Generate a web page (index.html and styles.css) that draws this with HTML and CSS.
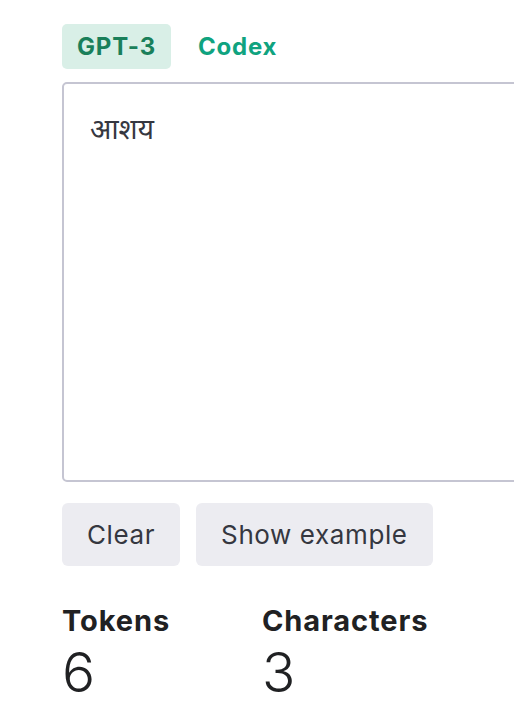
FILE: index.html
```html
<!DOCTYPE html>
<html lang="en">
<head>
    <meta charset="UTF-8">
    <title>Tokenizer</title>
    <link rel="stylesheet" href="styles.css">
</head>
<body>
<div class="container">
    <div class="tabs">
        <span class="tab tab-active">GPT-3</span>
        <span class="tab">Codex</span>
    </div>

    <div class="input-box">आशय</div>

    <div class="actions">
        <button class="btn">Clear</button>
        <button class="btn">Show example</button>
    </div>

    <div class="stats">
        <div class="stat">
            <div class="stat-label">Tokens</div>
            <div class="stat-value">6</div>
        </div>
        <div class="stat">
            <div class="stat-label">Characters</div>
            <div class="stat-value">3</div>
        </div>
    </div>
</div>
</body>
</html>
```

FILE: styles.css
```css
body {
    font-family: Inter, "Noto Sans", sans-serif;
    background-color: #fff;
    color: #202123;
    margin: 0;
    padding: 0;
    overflow: hidden;
}
.container {
    width: 600px;
    padding: 24px 0 0 62px;
}
.tabs {
    display: flex;
    align-items: center;
    gap: 12px;
    height: 45px;
}
.tab {
    font-size: 24px;
    font-weight: 700;
    letter-spacing: 0.8px;
    color: #10a37f;
    padding: 0 15px;
    height: 45px;
    line-height: 45px;
    border-radius: 5px;
}
.tab-active {
    background-color: #d9efe7;
    color: #1a7f5a;
}
.input-box {
    margin-top: 13px;
    height: 400px;
    border: 2px solid #c5c5d2;
    border-radius: 5px;
    padding: 25px 26px;
    box-sizing: border-box;
    font-family: "Noto Sans", sans-serif;
    font-size: 28px;
    color: #353740;
}
.actions {
    display: flex;
    gap: 16px;
    margin-top: 21px;
}
.btn {
    font-family: Inter, sans-serif;
    font-size: 26px;
    letter-spacing: 0.6px;
    color: #353740;
    background-color: #ececf1;
    border: none;
    border-radius: 6px;
    height: 63px;
    padding: 0 25px;
}
.stats {
    display: flex;
    margin-top: 36px;
}
.stat {
    width: 200px;
}
.stat-label {
    font-size: 29px;
    font-weight: 700;
    letter-spacing: 0.9px;
    line-height: 38px;
}
.stat-value {
    font-size: 55px;
    font-weight: 300;
    line-height: 64px;
}
```
